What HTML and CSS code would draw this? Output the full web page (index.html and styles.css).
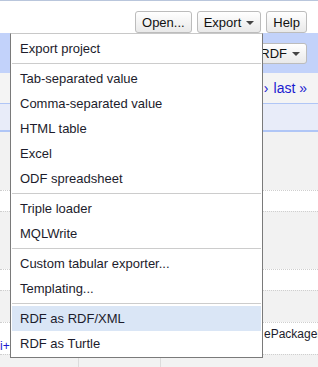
FILE: index.html
```html
<!DOCTYPE html>
<html lang="en">
<head>
    <meta charset="UTF-8">
    <meta name="viewport" content="width=device-width, initial-scale=1.0">
    <title>Export menu</title>
    <link rel="stylesheet" href="styles.css">
</head>
<body>

    <!-- Top toolbar -->
    <div class="toolbar">
        <button class="button">Open...</button>
        <button class="button">Export <span class="caret"></span></button>
        <button class="button">Help</button>
    </div>

    <!-- Grid header area behind the menu -->
    <div class="extensions-bar">
        <button class="button button-small">RDF <span class="caret"></span></button>
    </div>

    <div class="pager">
        <a href="#">›</a>
        <a href="#">last »</a>
    </div>

    <div class="column-header"></div>

    <div class="rows">
        <div class="row odd first"></div>
        <div class="row even"></div>
        <div class="row odd tall"></div>
        <div class="row even"></div>
        <div class="row odd mid"></div>
        <div class="row even mid">
            <span class="cell-link">i+</span>
            <span class="cell-text">ePackageDe</span>
        </div>
        <div class="row odd last">
            <span class="col"></span>
            <span class="col"></span>
            <span class="col"></span>
        </div>
    </div>

    <!-- Export dropdown menu -->
    <div class="menu">
        <a class="menu-item" href="#">Export project</a>
        <hr class="menu-separator">
        <a class="menu-item" href="#">Tab-separated value</a>
        <a class="menu-item" href="#">Comma-separated value</a>
        <a class="menu-item" href="#">HTML table</a>
        <a class="menu-item" href="#">Excel</a>
        <a class="menu-item" href="#">ODF spreadsheet</a>
        <hr class="menu-separator">
        <a class="menu-item" href="#">Triple loader</a>
        <a class="menu-item" href="#">MQLWrite</a>
        <hr class="menu-separator">
        <a class="menu-item" href="#">Custom tabular exporter...</a>
        <a class="menu-item" href="#">Templating...</a>
        <hr class="menu-separator">
        <a class="menu-item active" href="#">RDF as RDF/XML</a>
        <a class="menu-item" href="#">RDF as Turtle</a>
    </div>

</body>
</html>
```

FILE: styles.css
```css
/* General Styles */
:root {
    --text-color: #1c1c2c;
    --link-color: #1a1ad0;
    --band-blue: #c2d2fa;
    --band-light: #e8ecf9;
    --line-blue: #b0c6f6;
    --row-grey: #f2f2f2;
    --dotted: #cfcfcf;
}

body {
    font-family: 'Liberation Sans', Arial, sans-serif;
    font-size: 13px;
    color: var(--text-color);
    background-color: #ffffff;
    margin: 0;
    padding: 0;
    position: relative;
    height: 367px;
    overflow: hidden;
}

/* Toolbar */
.toolbar {
    border-top: 1px solid #b9c6dc;
    height: 32px;
    display: flex;
    justify-content: flex-end;
    align-items: flex-end;
    gap: 5px;
    padding-right: 11px;
}

.button {
    font-family: inherit;
    font-size: 13px;
    color: #111;
    height: 22px;
    padding: 0 6px;
    border: 1px solid #bcbcbc;
    border-radius: 3px;
    background: linear-gradient(#ffffff, #e9e9e9);
    display: flex;
    align-items: center;
    gap: 4px;
    cursor: pointer;
}

.button-small {
    height: 21px;
}

.caret {
    display: inline-block;
    width: 0;
    height: 0;
    border-left: 4px solid transparent;
    border-right: 4px solid transparent;
    border-top: 4px solid #444;
    margin-left: 1px;
    margin-top: 1px;
}

/* Bands behind the menu */
.extensions-bar {
    background-color: var(--band-blue);
    height: 40px;
    display: flex;
    justify-content: flex-end;
    align-items: center;
    padding-right: 11px;
}

.pager {
    background-color: #f4f4f4;
    height: 30px;
    display: flex;
    justify-content: flex-end;
    align-items: center;
    gap: 5px;
    padding-right: 11px;
    font-size: 14px;
}

.pager a {
    color: var(--link-color);
    text-decoration: none;
}

.column-header {
    height: 26px;
    background-color: var(--band-light);
    border-top: 1px solid var(--line-blue);
    border-bottom: 2px solid var(--line-blue);
}

/* Data rows */
.rows {
    overflow: hidden;
}

.row {
    height: 20px;
    border-top: 1px dotted var(--dotted);
    position: relative;
    overflow: hidden;
}

.row.first {
    border-top: none;
    height: 58px;
}

.odd {
    background-color: var(--row-grey);
}

.even {
    background-color: #ffffff;
}

.tall {
    height: 57px;
}

.mid {
    height: 31px;
}

.cell-link {
    position: absolute;
    left: 0;
    top: 16px;
    font-size: 12px;
    color: var(--link-color);
}

.cell-text {
    position: absolute;
    left: 264px;
    top: 4px;
    font-size: 12px;
    white-space: nowrap;
}

.last {
    height: 12px;
    display: grid;
    grid-template-columns: 78px 82px 1fr;
}

.col {
    border-left: 1px solid #dcdcdc;
}

.col:first-child {
    border-left: none;
}

/* Dropdown menu */
.menu {
    position: absolute;
    left: 10px;
    top: 33px;
    width: 249px;
    padding: 2px 1px 1px;
    background-color: #ffffff;
    border: 1px solid #7a7a7a;
    border-top-color: #c8c8c8;
    display: flex;
    flex-direction: column;
}

.menu-item {
    height: 25px;
    line-height: 25px;
    padding-left: 8px;
    color: var(--text-color);
    text-decoration: none;
}

.menu-item.active {
    background-color: #dae6f6;
}

.menu-separator {
    border: none;
    border-top: 1px solid #cccccc;
    margin: 2px 0;
    height: 0;
}
```
